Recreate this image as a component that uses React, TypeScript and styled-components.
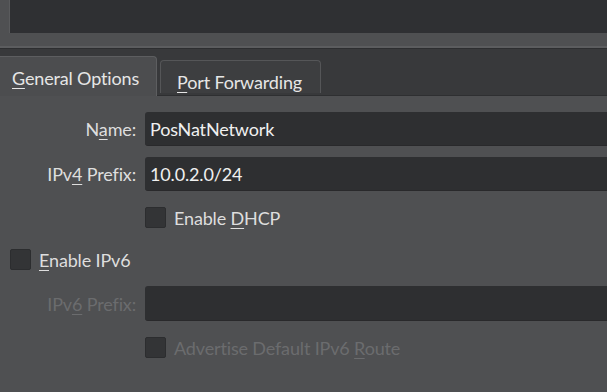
import React from "react";
import styled, { createGlobalStyle } from "styled-components";

const GlobalStyle = createGlobalStyle`
  html, body {
    margin: 0;
    padding: 0;
    background: #4f5052;
  }
  body {
    font-family: "Segoe UI", Lato, "Liberation Sans", sans-serif;
  }
`;

const Window = styled.div`
  width: 607px;
  height: 392px;
  overflow: hidden;
  background: #4f5052;
  color: #dedede;
  font-size: 18px;
  letter-spacing: -0.15px;
`;

const TopBox = styled.div`
  height: 33px;
  margin-left: 9px;
  background: #2f3033;
  border-left: 1px solid #5a5b5d;
`;

const TabBar = styled.div`
  margin-top: 13px;
  height: 47px;
  display: flex;
  align-items: flex-end;
  background: #38393b;
  border-top: 2px solid #5c5d5f;
  box-shadow: inset 0 1px 0 #2d2e30;
  border-bottom: 1px solid #2e2f31;
`;

const Tab = styled.div<{ $active?: boolean }>`
  box-sizing: border-box;
  display: flex;
  align-items: flex-start;
  white-space: nowrap;
  color: #e6e6e6;
  ${(p) =>
    p.$active
      ? `
    width: 157px;
    height: 40px;
    margin-bottom: -1px;
    padding: 10px 0 0 12px;
    background: #4c4d4f;
    border-top: 1px solid #5d5e60;
    border-right: 1px solid #5d5e60;
    border-top-right-radius: 4px;
    position: relative;
  `
      : `
    width: 161px;
    height: 33px;
    margin: 0 0 2px 3px;
    padding: 10px 0 0 16px;
    background: #3d3e40;
    border: 1px solid #555658;
    border-bottom: none;
    border-radius: 4px 4px 0 0;
  `}
`;

const Key = styled.span`
  text-decoration: underline;
  text-underline-offset: 3px;
  text-decoration-thickness: 1px;
`;

const Form = styled.div`
  display: grid;
  grid-template-columns: 136px 1fr;
  column-gap: 9px;
  row-gap: 11px;
  padding-top: 16px;
`;

const Label = styled.div<{ $disabled?: boolean }>`
  display: flex;
  align-items: center;
  justify-content: flex-end;
  white-space: nowrap;
  color: ${(p) => (p.$disabled ? "#6b6c6e" : "#dedede")};
`;

const Field = styled.div<{ $tall?: boolean }>`
  box-sizing: border-box;
  height: ${(p) => (p.$tall ? 35 : 34)}px;
  margin-right: -12px;
  padding-left: 5px;
  display: flex;
  align-items: center;
  background: #2e2f31;
  border-radius: 3px;
  border-bottom: 1px solid #29292b;
  color: #f0f0f0;
`;

const CheckRow = styled.div<{ $full?: boolean; $indent?: number }>`
  grid-column: ${(p) => (p.$full ? "1 / -1" : "2")};
  height: 31px;
  display: flex;
  align-items: center;
  gap: 8px;
  padding-left: ${(p) => p.$indent ?? 0}px;
`;

const Box = styled.div`
  box-sizing: border-box;
  width: 21px;
  height: 21px;
  background: #333436;
  border: 1px solid #2c2d2f;
  border-radius: 2px;
`;

const CheckText = styled.span<{ $disabled?: boolean }>`
  white-space: nowrap;
  color: ${(p) => (p.$disabled ? "#6b6c6e" : "#dedede")};
`;

export default function App() {
  return (
    <Window>
      <GlobalStyle />
      <TopBox />
      <TabBar>
        <Tab $active>
          <span>
            <Key>G</Key>eneral Options
          </span>
        </Tab>
        <Tab>
          <span>
            <Key>P</Key>ort Forwarding
          </span>
        </Tab>
      </TabBar>
      <Form>
        <Label>
          <span>
            N<Key>a</Key>me:
          </span>
        </Label>
        <Field>PosNatNetwork</Field>
        <Label>
          <span>
            IPv<Key>4</Key> Prefix:
          </span>
        </Label>
        <Field>10.0.2.0/24</Field>
        <CheckRow>
          <Box />
          <CheckText>
            Enable <Key>D</Key>HCP
          </CheckText>
        </CheckRow>
        <CheckRow $full $indent={10}>
          <Box />
          <CheckText>
            <Key>E</Key>nable IPv6
          </CheckText>
        </CheckRow>
        <Label $disabled>
          <span>
            IPv<Key>6</Key> Prefix:
          </span>
        </Label>
        <Field $tall />
        <CheckRow>
          <Box />
          <CheckText $disabled>
            Advertise Default IPv6 <Key>R</Key>oute
          </CheckText>
        </CheckRow>
      </Form>
    </Window>
  );
}
